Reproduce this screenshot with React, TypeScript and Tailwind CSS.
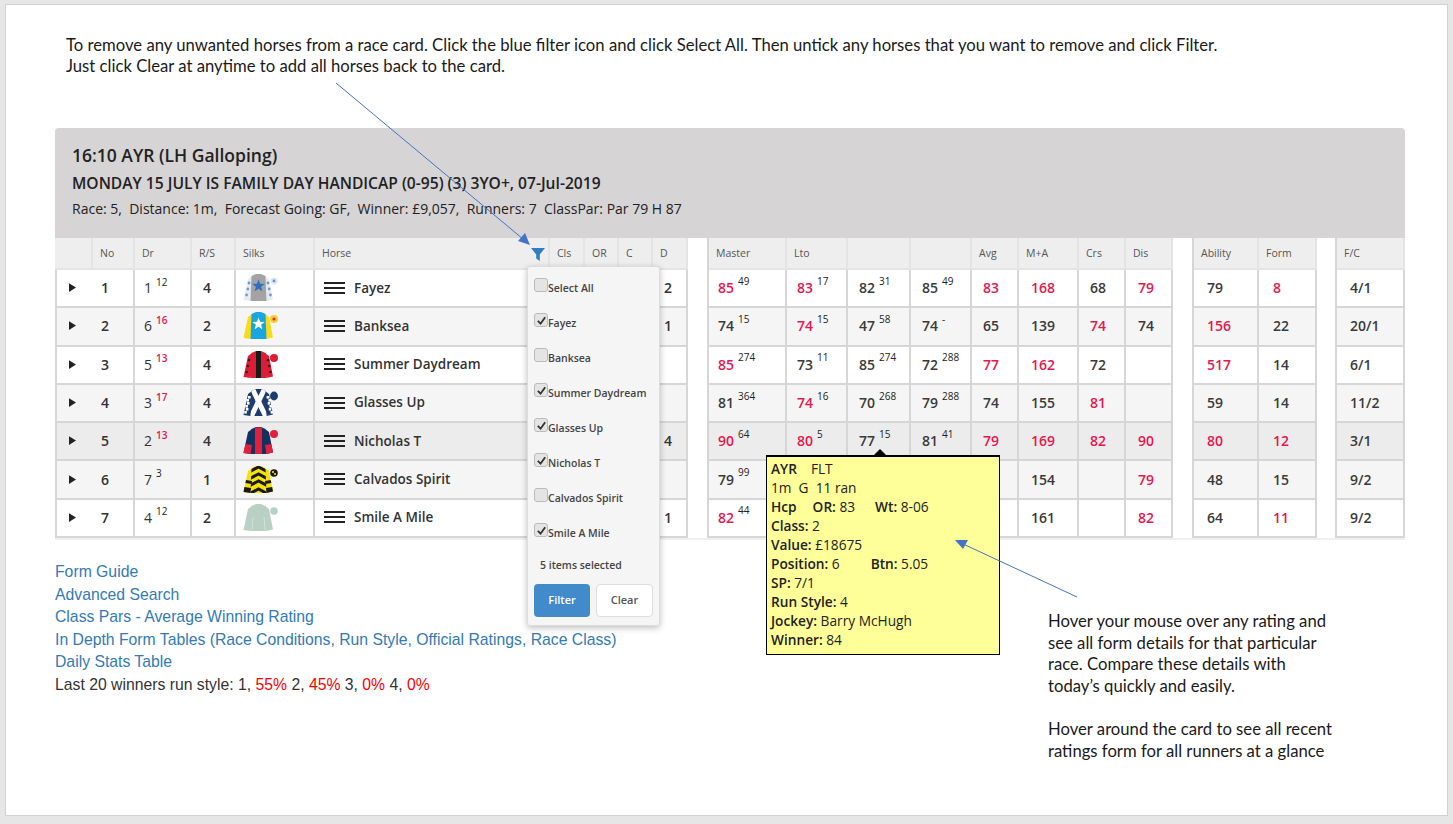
const sans = "font-['Open_Sans','Noto_Sans',sans-serif]";
const note = "font-['Lato','Open_Sans',sans-serif]";

type Rating = { v: string; s?: string; red?: boolean };

const r = (v: string, s?: string, red?: boolean): Rating => ({ v, s, red });

const rowBg = ["bg-white", "bg-[#f5f5f5]", "bg-white", "bg-[#f5f5f5]", "bg-[#ececec]", "bg-[#f5f5f5]", "bg-white"];

const horses = [
  { no: 1, dr: "1", drs: "12", drRed: false, rs: 4, name: "Fayez", d: "2" },
  { no: 2, dr: "6", drs: "16", drRed: true, rs: 2, name: "Banksea", d: "1" },
  { no: 3, dr: "5", drs: "13", drRed: true, rs: 4, name: "Summer Daydream", d: "" },
  { no: 4, dr: "3", drs: "17", drRed: true, rs: 4, name: "Glasses Up", d: "" },
  { no: 5, dr: "2", drs: "13", drRed: true, rs: 4, name: "Nicholas T", d: "4" },
  { no: 6, dr: "7", drs: "3", drRed: false, rs: 1, name: "Calvados Spirit", d: "" },
  { no: 7, dr: "4", drs: "12", drRed: false, rs: 2, name: "Smile A Mile", d: "1" },
];

const ratings: Rating[][] = [
  [r("85", "49", true), r("83", "17", true), r("82", "31"), r("85", "49"), r("83", undefined, true), r("168", undefined, true), r("68"), r("79", undefined, true)],
  [r("74", "15"), r("74", "15", true), r("47", "58"), r("74", "-"), r("65"), r("139"), r("74", undefined, true), r("74")],
  [r("85", "274", true), r("73", "11"), r("85", "274"), r("72", "288"), r("77", undefined, true), r("162", undefined, true), r("72"), r("")],
  [r("81", "364"), r("74", "16", true), r("70", "268"), r("79", "288"), r("74"), r("155"), r("81", undefined, true), r("")],
  [r("90", "64", true), r("80", "5", true), r("77", "15"), r("81", "41"), r("79", undefined, true), r("169", undefined, true), r("82", undefined, true), r("90", undefined, true)],
  [r("79", "99"), r(""), r(""), r(""), r(""), r("154"), r(""), r("79", undefined, true)],
  [r("82", "44", true), r(""), r(""), r(""), r(""), r("161"), r(""), r("82", undefined, true)],
];

const ability: Rating[][] = [
  [r("79"), r("8", undefined, true)],
  [r("156", undefined, true), r("22")],
  [r("517", undefined, true), r("14")],
  [r("59"), r("14")],
  [r("80", undefined, true), r("12", undefined, true)],
  [r("48"), r("15")],
  [r("64"), r("11", undefined, true)],
];

const prices = ["4/1", "20/1", "6/1", "11/2", "3/1", "9/2", "9/2"];

const filterItems = [
  { label: "Select All", on: false },
  { label: "Fayez", on: true },
  { label: "Banksea", on: false },
  { label: "Summer Daydream", on: true },
  { label: "Glasses Up", on: true },
  { label: "Nicholas T", on: true },
  { label: "Calvados Spirit", on: false },
  { label: "Smile A Mile", on: true },
];

const body = "M8.5 3 L13 1 L18 1 L22.5 3 L23.5 28 L7.5 28 Z";
const sleeveL = "M9 3 L5 6 L0.5 27 L7.5 28 L10 14 Z";
const sleeveR = "M22 3 L26 6 L30 26.5 L23.5 28 L21 14 Z";

function Star({ x, y, s, fill }: { x: number; y: number; s: number; fill: string }) {
  const pts = Array.from({ length: 10 }, (_, i) => {
    const a = (Math.PI / 5) * i - Math.PI / 2;
    const rad = i % 2 === 0 ? s : s * 0.42;
    return `${x + rad * Math.cos(a)},${y + rad * Math.sin(a)}`;
  }).join(" ");
  return <polygon points={pts} fill={fill} />;
}

function Silk({ n }: { n: number }) {
  const clip = `silk-body-${n}`;
  const common = (b: string, s: string) => (
    <>
      <path d={sleeveL} fill={s} />
      <path d={sleeveR} fill={s} />
      <path d={body} fill={b} />
    </>
  );
  let art = null;
  if (n === 1) {
    art = (
      <>
        {common("#a3a3a3", "#e6ebf3")}
        {[10, 16, 22].map((y) => (
          <g key={y}>
            <circle cx={6 - (y - 10) * 0.2} cy={y} r="1.4" fill="#6a9ad6" />
            <circle cx={25 + (y - 10) * 0.2} cy={y} r="1.4" fill="#6a9ad6" />
          </g>
        ))}
        <Star x={15.5} y={13} s={6.5} fill="#2d6fc0" />
        <circle cx="31" cy="8" r="3.6" fill="#e0e7f2" />
        <circle cx="31" cy="8" r="1.4" fill="#5b8fd0" />
      </>
    );
  } else if (n === 2) {
    art = (
      <>
        {common("#18a5e0", "#f7dc1a")}
        <Star x={15.5} y={13} s={6.5} fill="#ffffff" />
        <circle cx="31" cy="8" r="4" fill="#f2cf3a" />
        <circle cx="31" cy="8" r="1.6" fill="#e53030" />
      </>
    );
  } else if (n === 3) {
    art = (
      <>
        {common("#df1c35", "#df1c35")}
        <rect x="13" y="1" width="5" height="27" fill="#1a1a1a" />
        {[10, 16, 22].map((y) => (
          <g key={y}>
            <circle cx={6 - (y - 10) * 0.2} cy={y} r="1.3" fill="#222" />
            <circle cx={25 + (y - 10) * 0.2} cy={y} r="1.3" fill="#222" />
          </g>
        ))}
        <circle cx="31" cy="8" r="4" fill="#df1c35" />
      </>
    );
  } else if (n === 4) {
    art = (
      <>
        {common("#1d3d70", "#1d3d70")}
        <clipPath id={clip}>
          <path d={body} />
        </clipPath>
        <g clipPath={`url(#${clip})`} stroke="#ffffff" strokeWidth="5">
          <path d="M9 0 L23 29" />
          <path d="M22 0 L8 29" />
        </g>
        {[8, 14, 20].map((y) => (
          <g key={y} fill="#ffffff">
            <rect x={5 - (y - 8) * 0.18} y={y} width="2.6" height="2.6" />
            <rect x={3.4 - (y - 8) * 0.18} y={y + 3} width="2.6" height="2.6" />
            <rect x={23.6 + (y - 8) * 0.18} y={y} width="2.6" height="2.6" />
            <rect x={25.4 + (y - 8) * 0.18} y={y + 3} width="2.6" height="2.6" />
          </g>
        ))}
        <ellipse cx="31" cy="8" rx="4" ry="4.4" fill="#1d3d70" />
      </>
    );
  } else if (n === 5) {
    art = (
      <>
        {common("#14305f", "#14305f")}
        <rect x="12" y="1.5" width="7" height="26.5" fill="#e0203c" />
        <path d="M2.4 18 L9 19 L7.5 28 L0.5 27 Z M28.4 18 L22 19 L23.5 28 L30 26.5 Z" fill="#e0203c" />
        <circle cx="31" cy="8" r="4" fill="#e0203c" />
      </>
    );
  } else if (n === 6) {
    art = (
      <>
        {common("#f4e20f", "#f4e20f")}
        <clipPath id={clip}>
          <path d={body} />
        </clipPath>
        <g clipPath={`url(#${clip})`} fill="none" stroke="#1c1a10" strokeWidth="3">
          <path d="M6 7 L15.5 2 L25 7" />
          <path d="M6 14 L15.5 9 L25 14" />
          <path d="M6 21 L15.5 16 L25 21" />
          <path d="M6 29 L15.5 24 L25 29" />
        </g>
        <path d="M3 15 L9 16 L8.6 19 L2.4 18 Z M1.4 22 L8 23 L7.5 28 L0.5 27 Z M27.6 15 L22 16 L22.4 19 L28.4 18 Z M29.2 22 L23 23 L23.5 28 L30 26.5 Z" fill="#1c1a10" />
        <circle cx="31" cy="8" r="3.8" fill="#1c1a10" />
        <circle cx="30" cy="7" r="1.1" fill="#f4e20f" />
        <circle cx="32" cy="9" r="1.1" fill="#f4e20f" />
      </>
    );
  } else {
    art = (
      <>
        {common("#b9d0c4", "#b9d0c4")}
        <path d="M10 14 L9 27 M21 14 L22 27" stroke="#dce8e2" strokeWidth="0.7" />
        <circle cx="31" cy="8" r="3.8" fill="#b9d0c4" />
      </>
    );
  }
  return (
    <svg viewBox="0 0 36 29" className="h-[29px] w-[36px]">
      {art}
    </svg>
  );
}

function Cell({ item, pad }: { item: Rating; pad: string }) {
  return (
    <div className={`flex items-center border-r-2 border-b-2 border-[#d6d6d6] pb-[1px] text-[14px] font-semibold ${pad}`}>
      <span className={item.red ? "text-[#e8164e]" : "text-[#3a3a3a]"}>{item.v}</span>
      {item.s ? <sup className="top-[-7px] ml-[4px] text-[10px] font-normal text-[#222]">{item.s}</sup> : null}
    </div>
  );
}

function Head({ label }: { label: string }) {
  return (
    <div className="flex h-[32px] items-center border-r-2 border-b-2 border-[#e4e4e4] bg-[#eeeeee] pl-[7px] pt-[1px] text-[10.5px] text-[#555]">
      {label}
    </div>
  );
}

function RatingTable({ columns, heads, rows, pads }: { columns: string; heads: string[]; rows: Rating[][]; pads: string[] }) {
  return (
    <div className={`grid auto-rows-[38.3px] grid-rows-[32px] border-l-2 border-[#d6d6d6] ${columns}`}>
      {heads.map((h, i) => (
        <Head key={i} label={h} />
      ))}
      {rows.map((row, i) =>
        row.map((c, j) => (
          <div key={`${i}-${j}`} className={`grid ${rowBg[i]}`}>
            <Cell item={c} pad={pads[j]} />
          </div>
        )),
      )}
    </div>
  );
}

function HorseTable() {
  const heads = ["", "Dr", "R/S", "Silks", "Horse", "Cls", "OR", "C", "D"];
  return (
    <div className="grid w-[633px] auto-rows-[38.3px] grid-rows-[32px] grid-cols-[80px_57px_44px_79px_235px_35px_34px_34px_35px]">
      {heads.map((h, i) =>
        i === 0 ? (
          <div key={i} className="flex h-[32px] border-r-2 border-b-2 border-[#e4e4e4] bg-[#eeeeee] text-[10.5px] text-[#555]">
            <div className="w-[38px] border-r-2 border-[#e4e4e4]" />
            <div className="flex items-center pl-[7px] pt-[1px]">No</div>
          </div>
        ) : h === "Horse" ? (
          <div key={i} className="flex h-[32px] items-center justify-between border-r-2 border-b-2 border-[#e4e4e4] bg-[#eeeeee] pl-[7px] pr-[2px] pt-[1px] text-[10.5px] text-[#555]">
            Horse
            <svg viewBox="0 0 16 16" className="h-[16px] w-[16px]">
              <path d="M1 2 H15 L9.8 8.6 V15 L6.2 12.6 V8.6 Z" fill="#2f7ec4" />
            </svg>
          </div>
        ) : (
          <Head key={i} label={h} />
        ),
      )}
      {horses.map((h, i) => {
        const cell = `flex items-center border-r-2 border-b-2 border-[#d6d6d6] pb-[1px] ${rowBg[i]}`;
        return (
          <div key={h.no} className="contents text-[#333]">
            <div className={`${cell} border-l-2 pl-[12px] text-[14px] font-semibold`}>
              <svg viewBox="0 0 8 10" className="mr-[25px] h-[9px] w-[7px]">
                <path d="M0 0 L8 5 L0 10 Z" fill="#222" />
              </svg>
              {h.no}
            </div>
            <div className={`${cell} pl-[9px] text-[14px]`}>
              {h.dr}
              <sup className={`top-[-6px] ml-[4px] text-[10px] ${h.drRed ? "font-semibold text-[#e8164e]" : "text-[#222]"}`}>{h.drs}</sup>
            </div>
            <div className={`${cell} pl-[11px] text-[14px] font-semibold`}>{h.rs}</div>
            <div className={`${cell} pl-[7px]`}>
              <Silk n={h.no} />
            </div>
            <div className={`${cell} pl-[9px] text-[13.5px] font-semibold`}>
              <span className="mr-[9px] flex w-[21px] flex-col gap-[3px]">
                <span className="h-[2px] bg-[#222]" />
                <span className="h-[2px] bg-[#222]" />
                <span className="h-[2px] bg-[#222]" />
              </span>
              {h.name}
            </div>
            <div className={cell} />
            <div className={cell} />
            <div className={cell} />
            <div className={`${cell} pl-[11px] text-[14px] font-semibold`}>{h.d}</div>
          </div>
        );
      })}
    </div>
  );
}

function FilterMenu() {
  return (
    <div className="absolute left-[521px] top-[261px] flex h-[360px] w-[133px] flex-col rounded-[3px] border border-[#dddddd] bg-[#f5f5f5] px-[6px] pt-[11px] text-[10.5px] font-semibold text-[#444] shadow-[0_2px_6px_rgba(0,0,0,0.25)]">
      {filterItems.map((f) => (
        <div key={f.label} className="flex h-[35px] shrink-0 items-start">
          <span className="flex h-[14px] w-[14px] shrink-0 items-center justify-center rounded-[3px] border border-[#bbbbbb] bg-[#e4e4e4]">
            {f.on ? (
              <svg viewBox="0 0 12 12" className="h-[11px] w-[11px]">
                <path d="M2 6.5 L5 9.5 L10 2.5" fill="none" stroke="#333" strokeWidth="2" />
              </svg>
            ) : null}
          </span>
          <span className="mt-[3px] whitespace-nowrap">{f.label}</span>
        </div>
      ))}
      <div className="pl-[6px]">5 items selected</div>
      <div className="mt-[10px] flex gap-[6px] font-normal">
        <button className="h-[33px] w-[56px] rounded-[4px] bg-[#428bca] text-[11px] font-semibold text-white">Filter</button>
        <button className="h-[33px] w-[57px] rounded-[4px] border border-[#dddddd] bg-white text-[11px] font-semibold text-[#555]">Clear</button>
      </div>
    </div>
  );
}

function Tip() {
  return (
    <div className="absolute left-[760px] top-[450px] h-[200px] w-[234px] border border-t-2 border-black bg-[#ffff99] px-[4px] pt-[2px] text-[13.7px] leading-[19px] text-[#222]">
      <svg viewBox="0 0 12 6" className="absolute left-[107px] top-[-8px] h-[6px] w-[12px]">
        <path d="M0 6 L6 0 L12 6 Z" fill="#000" />
      </svg>
      <div><b className="font-semibold">AYR</b><span className="ml-[14px]">FLT</span></div>
      <div>1m&nbsp; G&nbsp; 11 ran</div>
      <div>
        <b className="font-semibold">Hcp</b>
        <b className="ml-[16px] font-semibold">OR:</b> 83
        <b className="ml-[20px] font-semibold">Wt:</b> 8-06
      </div>
      <div><b className="font-semibold">Class:</b> 2</div>
      <div><b className="font-semibold">Value:</b> £18675</div>
      <div>
        <b className="font-semibold">Position:</b> 6
        <b className="ml-[31px] font-semibold">Btn:</b> 5.05
      </div>
      <div><b className="font-semibold">SP:</b> 7/1</div>
      <div><b className="font-semibold">Run Style:</b> 4</div>
      <div><b className="font-semibold">Jockey:</b> Barry McHugh</div>
      <div><b className="font-semibold">Winner:</b> 84</div>
    </div>
  );
}

function Arrows() {
  return (
    <svg viewBox="0 0 1442 810" className="pointer-events-none absolute left-[-1px] top-0 h-[810px] w-[1442px]">
      <path d="M331 78 L518 234" stroke="#4472c4" strokeWidth="1" fill="none" />
      <path d="M525 240 L513 236 L520 228 Z" fill="#4472c4" />
      <path d="M1072 592 L956 538" stroke="#4472c4" strokeWidth="1" fill="none" />
      <path d="M950 535 L963 535 L958 544 Z" fill="#4472c4" />
    </svg>
  );
}

const masterPads = ["pl-[9px]", "pl-[10px]", "pl-[11px]", "pl-[11px]", "pl-[11px]", "pl-[12px]", "pl-[11px]", "pl-[12px]"];
const abilityPads = ["pl-[13px]", "pl-[14px]"];
const pricePads = ["pl-[13px]"];

export default function App() {
  return (
    <div className={`h-[824px] w-[1453px] overflow-hidden bg-[#e6e6e6] py-[4px] pl-[5px] ${sans}`}>
      <div className="relative h-[812px] w-[1443px] border border-[#d2d2d2] bg-white pl-[49px]">
        <p className={`pl-[11px] pt-[30px] text-[16.68px] leading-[21px] text-[#1a1a1a] ${note}`}>
          To remove any unwanted horses from a race card. Click the blue filter icon and click Select All. Then untick any horses that you want to remove and click Filter.
          <br />
          Just click Clear at anytime to add all horses back to the card.
        </p>

        <div className="mt-[51px] w-[1350px] border-b-2 border-[#f0f0f0]">
          <div className="h-[110px] rounded-t-[4px] bg-[#d6d4d5] pl-[17px] pt-[14px] text-[#222]">
            <h2 className="text-[17.5px] font-semibold leading-[26px]">16:10 AYR (LH Galloping)</h2>
            <h3 className="mt-[3px] text-[15.6px] font-semibold leading-[24px]">MONDAY 15 JULY IS FAMILY DAY HANDICAP (0-95) (3) 3YO+, 07-Jul-2019</h3>
            <p className="mt-[2px] whitespace-pre text-[14px] leading-[24px]">Race: 5,  Distance: 1m,  Forecast Going: GF,  Winner: £9,057,  Runners: 7  ClassPar: Par 79 H 87</p>
          </div>
          <div className="flex">
            <HorseTable />
            <div className="ml-[19px]">
              <RatingTable
                columns="grid-cols-[78px_61px_63px_61px_47px_60px_47px_47px]"
                heads={["Master", "Lto", "", "", "Avg", "M+A", "Crs", "Dis"]}
                rows={ratings}
                pads={masterPads}
              />
            </div>
            <div className="ml-[19px]">
              <RatingTable columns="grid-cols-[65px_58px]" heads={["Ability", "Form"]} rows={ability} pads={abilityPads} />
            </div>
            <div className="ml-[18px]">
              <RatingTable columns="grid-cols-[68px]" heads={["F/C"]} rows={prices.map((p) => [r(p)])} pads={pricePads} />
            </div>
          </div>
        </div>

        <div className="mt-[21px] flex">
          <div className="w-[993px] font-['Liberation_Sans',Arial,sans-serif] text-[15.75px] leading-[22.5px] text-[#337ab7]">
            <div>Form Guide</div>
            <div>Advanced Search</div>
            <div>Class Pars - Average Winning Rating</div>
            <div>In Depth Form Tables (Race Conditions, Run Style, Official Ratings, Race Class)</div>
            <div>Daily Stats Table</div>
            <div className="text-[#333]">
              Last 20 winners run style: 1, <span className="text-[#ff0000]">55%</span> 2, <span className="text-[#ff0000]">45%</span> 3, <span className="text-[#ff0000]">0%</span> 4, <span className="text-[#ff0000]">0%</span>
            </div>
          </div>
          <div className={`mt-[50px] w-[287px] text-[16.68px] leading-[21.6px] text-[#1a1a1a] ${note}`}>
            <p>Hover your mouse over any rating and see all form details for that particular race. Compare these details with today’s quickly and easily.</p>
            <p className="mt-[22px]">Hover around the card to see all recent ratings form for all runners at a glance</p>
          </div>
        </div>

        <FilterMenu />
        <Tip />
        <Arrows />
      </div>
    </div>
  );
}
